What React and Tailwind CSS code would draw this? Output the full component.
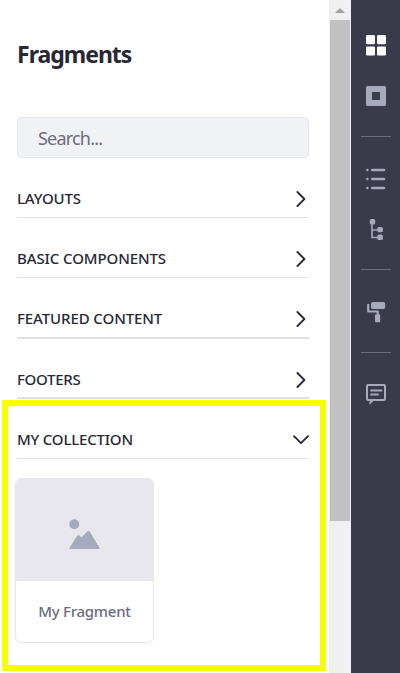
function Chevron({ open }) {
  return open ? (
    <svg className="mt-[2px]" width="16" height="10" viewBox="0 0 16 10" fill="none" stroke="#272833" strokeWidth="1.8" strokeLinecap="round" strokeLinejoin="round">
      <path d="M1 1.2 8 8.2l7-7" />
    </svg>
  ) : (
    <svg className="mr-[3px] mt-[2px]" width="10" height="16" viewBox="0 0 10 16" fill="none" stroke="#272833" strokeWidth="1.8" strokeLinecap="round" strokeLinejoin="round">
      <path d="M1.4 1 8.4 8l-7 7" />
    </svg>
  );
}

function Section({ title, open, spacing, line, height = "h-[60px]", row = "h-[38px]" }) {
  return (
    <div className={"flex flex-col justify-end shrink-0 " + height}>
      <div className={"flex items-center justify-between " + row}>
        <span className={"text-[15px] leading-5 font-medium whitespace-nowrap " + spacing}>{title}</span>
        <Chevron open={open} />
      </div>
      <div className={"shrink-0 bg-[#dfdfe9] " + line} />
    </div>
  );
}

function Divider() {
  return <div className="w-[30px] h-px bg-[#6b6c7e]" />;
}

function Toolbar() {
  return (
    <nav className="w-[49px] h-full bg-[#393a4a] flex flex-col items-center pt-[35px] text-[#a7a9bc]">
      <svg width="20" height="21" viewBox="0 0 20 21" fill="#fff">
        <rect width="9" height="9.2" rx="1.3" />
        <rect x="11" width="9" height="9.2" rx="1.3" />
        <rect y="11.4" width="9" height="9.2" rx="1.3" />
        <rect x="11" y="11.4" width="9" height="9.2" rx="1.3" />
      </svg>
      <svg className="mt-[30px]" width="20" height="20" viewBox="0 0 20 20" fill="currentColor">
        <path fillRule="evenodd" d="M1.5 0h17A1.5 1.5 0 0 1 20 1.5v17a1.5 1.5 0 0 1-1.5 1.5h-17A1.5 1.5 0 0 1 0 18.5v-17A1.5 1.5 0 0 1 1.5 0ZM6 6v8h8V6Z" />
      </svg>
      <div className="mt-[30px]"><Divider /></div>
      <svg className="mt-[31px]" width="20" height="22" viewBox="0 0 20 22" fill="currentColor">
        <circle cx="1.4" cy="2" r="1.3" />
        <circle cx="1.4" cy="11" r="1.3" />
        <circle cx="1.4" cy="20" r="1.3" />
        <rect x="5" y="0.8" width="14.3" height="2.4" rx="1.2" />
        <rect x="5" y="9.8" width="14.3" height="2.4" rx="1.2" />
        <rect x="5" y="18.8" width="14.3" height="2.4" rx="1.2" />
      </svg>
      <svg className="mt-[29px]" width="20" height="21" viewBox="0 0 20 21" fill="currentColor">
        <rect x="3.8" y="0" width="5.4" height="5.4" rx="1.5" />
        <path d="M6 4v14.5h7M6 11h7" fill="none" stroke="currentColor" strokeWidth="1.6" />
        <rect x="11.3" y="8" width="5.6" height="5.3" rx="1.5" />
        <rect x="11.3" y="15.6" width="5.6" height="5.3" rx="1.5" />
      </svg>
      <div className="mt-[29px]"><Divider /></div>
      <svg className="mt-[32px]" width="20" height="21" viewBox="0 0 20 21" fill="currentColor">
        <rect x="5" y="0" width="14.2" height="7" rx="2" />
        <path d="M2.2 2.8v6.7h9.5v4" fill="none" stroke="currentColor" strokeWidth="2.2" strokeLinejoin="round" strokeLinecap="round" />
        <rect x="9" y="12.5" width="5.2" height="7.7" rx="0.6" />
      </svg>
      <div className="mt-[29px]"><Divider /></div>
      <svg className="mt-[31px]" width="20" height="21" viewBox="0 0 20 21" fill="none" stroke="currentColor" strokeWidth="2">
        <path d="M7.5 16H18a1 1 0 0 0 1-1V2a1 1 0 0 0-1-1H2a1 1 0 0 0-1 1v13a1 1 0 0 0 1 1h2" />
        <path d="M3 15h6.5l-5.3 5.300q-1 .500-.900-.800l.700-2.500Z" fill="currentColor" stroke="none" />
        <path d="M5 6.500h10.500M5 10.500h7" strokeLinecap="round" strokeWidth="1.800" />
      </svg>
    </nav>
  );
}

function Card() {
  return (
    <div className="mt-[19px] -ml-[2px] w-[139px] h-[165px] rounded-md border border-[#e7e7ed] bg-white overflow-hidden flex flex-col shrink-0">
      <div className="h-[102px] bg-[#e7e7ed] flex items-center justify-center shrink-0">
        <svg className="mt-[8px]" width="31" height="31" viewBox="0 0 31 31" fill="#a7a9bc">
          <circle cx="5.3" cy="5.3" r="5" />
          <path d="M.5 28.8 8.500 16.500q1-1.200 2 0l2 2 6-6.200q1-1 2 0l10 16.500q.500 1.200-.500 1.200H1Q0 30 .500 28.800Z" />
        </svg>
      </div>
      <div className="flex-1 flex items-center justify-center text-[15px] font-medium tracking-[-0.25px] text-[#6b6c7e] whitespace-nowrap">My Fragment</div>
    </div>
  );
}

export default function App() {
  return (
    <div className="relative w-[400px] h-[673px] overflow-hidden bg-white flex text-[#272833] font-['Noto_Sans',sans-serif]">
      <main className="w-[329px] pl-[17px] pr-5 flex flex-col">
        <h1 className="mt-[38px] text-[23px] leading-8 font-bold tracking-[-1px] whitespace-nowrap"><span>Fragments</span></h1>
        <div className="mt-[47px] h-[41px] shrink-0 rounded-[4px] border border-[#e4e4ed] bg-[#f1f2f5] pl-5 pt-0.5 flex items-center text-[18px] text-[#6b6c7e] tracking-[-0.8px]"><span>Search...</span></div>
        <Section title="LAYOUTS" spacing="tracking-[-0.15px]" line="h-px" />
        <Section title="BASIC COMPONENTS" spacing="tracking-[-0.1px]" line="h-px" />
        <Section title="FEATURED CONTENT" spacing="tracking-[-0.1px]" line="h-[2px]" height="h-[61px]" />
        <Section title="FOOTERS" spacing="tracking-[-0.3px]" line="h-[2px]" row="h-[36px]" />
        <Section title="MY COLLECTION" spacing="tracking-[-0.2px]" line="h-px" open />
        <Card />
      </main>
      <div className="w-[22px] bg-[#f0f0f0] flex flex-col items-center">
        <div className="h-5 w-full flex items-center justify-center shrink-0">
          <svg width="10" height="5" viewBox="0 0 10 5"><path d="M5 0 10 5H0Z" fill="#a3a3a3" /></svg>
        </div>
        <div className="w-5 h-[501px] bg-[#c1c1c1]" />
      </div>
      <Toolbar />
      <div className="absolute left-[2px] top-[400px] w-[324px] h-[271px] border-[6px] border-[#f7ff00]" />
    </div>
  );
}
